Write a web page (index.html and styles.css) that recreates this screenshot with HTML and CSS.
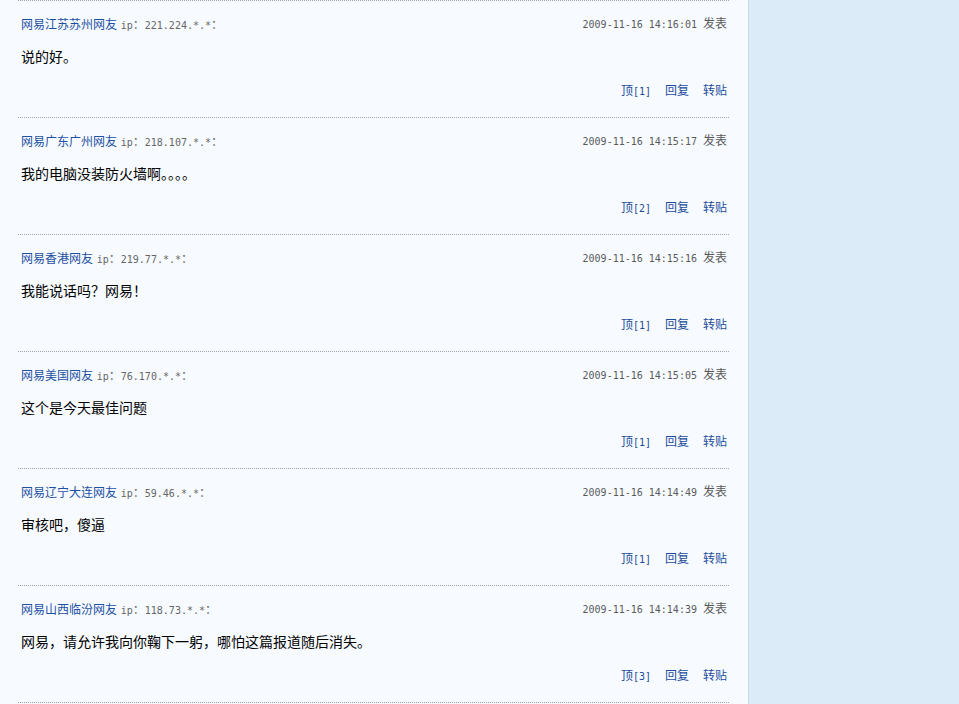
FILE: index.html
```html
<!DOCTYPE html>
<html lang="zh-CN">
<head>
<meta charset="utf-8">
<title>网友评论</title>
<link rel="stylesheet" href="styles.css">
</head>
<body>
<div class="page">
  <main class="main">
    <div class="comment">
      <div class="head">
        <div class="who"><a class="name" href="#">网易江苏苏州网友</a> <span class="ip"><span class="mono">ip</span>：<span class="mono">221.224.*.*</span>：</span></div>
        <div class="time"><span class="mono">2009-11-16 14:16:01 </span>发表</div>
      </div>
      <p class="text">说的好。</p>
      <div class="ops"><a href="#">顶<span class="mono">[1]</span></a><a href="#">回复</a><a href="#">转贴</a></div>
    </div>
    <div class="comment">
      <div class="head">
        <div class="who"><a class="name" href="#">网易广东广州网友</a> <span class="ip"><span class="mono">ip</span>：<span class="mono">218.107.*.*</span>：</span></div>
        <div class="time"><span class="mono">2009-11-16 14:15:17 </span>发表</div>
      </div>
      <p class="text">我的电脑没装防火墙啊。。。。</p>
      <div class="ops"><a href="#">顶<span class="mono">[2]</span></a><a href="#">回复</a><a href="#">转贴</a></div>
    </div>
    <div class="comment">
      <div class="head">
        <div class="who"><a class="name" href="#">网易香港网友</a> <span class="ip"><span class="mono">ip</span>：<span class="mono">219.77.*.*</span>：</span></div>
        <div class="time"><span class="mono">2009-11-16 14:15:16 </span>发表</div>
      </div>
      <p class="text">我能说话吗？网易！</p>
      <div class="ops"><a href="#">顶<span class="mono">[1]</span></a><a href="#">回复</a><a href="#">转贴</a></div>
    </div>
    <div class="comment">
      <div class="head">
        <div class="who"><a class="name" href="#">网易美国网友</a> <span class="ip"><span class="mono">ip</span>：<span class="mono">76.170.*.*</span>：</span></div>
        <div class="time"><span class="mono">2009-11-16 14:15:05 </span>发表</div>
      </div>
      <p class="text">这个是今天最佳问题</p>
      <div class="ops"><a href="#">顶<span class="mono">[1]</span></a><a href="#">回复</a><a href="#">转贴</a></div>
    </div>
    <div class="comment">
      <div class="head">
        <div class="who"><a class="name" href="#">网易辽宁大连网友</a> <span class="ip"><span class="mono">ip</span>：<span class="mono">59.46.*.*</span>：</span></div>
        <div class="time"><span class="mono">2009-11-16 14:14:49 </span>发表</div>
      </div>
      <p class="text">审核吧，傻逼</p>
      <div class="ops"><a href="#">顶<span class="mono">[1]</span></a><a href="#">回复</a><a href="#">转贴</a></div>
    </div>
    <div class="comment">
      <div class="head">
        <div class="who"><a class="name" href="#">网易山西临汾网友</a> <span class="ip"><span class="mono">ip</span>：<span class="mono">118.73.*.*</span>：</span></div>
        <div class="time"><span class="mono">2009-11-16 14:14:39 </span>发表</div>
      </div>
      <p class="text">网易，请允许我向你鞠下一躬，哪怕这篇报道随后消失。</p>
      <div class="ops"><a href="#">顶<span class="mono">[3]</span></a><a href="#">回复</a><a href="#">转贴</a></div>
    </div>
    <div class="comment comment-end"></div>
  </main>
  <aside class="side"></aside>
</div>
</body>
</html>
```
FILE: styles.css
```css
html, body {
  margin: 0;
  padding: 0;
  height: 100%;
}
body {
  font-family: "Noto Sans CJK SC", "Liberation Sans", sans-serif;
  font-size: 12px;
  color: #000;
  background: #dcebf8;
}
.page {
  display: flex;
  min-height: 100%;
  overflow: hidden;
}
.main {
  width: 711px;
  padding: 0 19px 0 18px;
  background: #f7fbff;
  border-right: 1px solid #c9d9ea;
  flex: none;
}
.side {
  flex: 1;
  background: #dcebf8;
}
.comment {
  border-top: 1px dotted #a3a3a3;
  height: 116px;
  padding: 0 2px 0 3px;
}
.comment-end {
  height: 2px;
}
.head {
  display: flex;
  justify-content: space-between;
  align-items: center;
  padding-top: 14px;
  height: 20px;
  line-height: 20px;
}
.name {
  color: #1d50a3;
  text-decoration: none;
  font-size: 12px;
}
.ip {
  color: #666;
  font-size: 12px;
  margin-left: 1px;
}
.mono {
  font-family: "DejaVu Sans Mono", "Liberation Mono", monospace;
  font-size: 10px;
}
.time {
  color: #5a5a5a;
  font-size: 12px;
  margin-top: -3px;
}
.text {
  margin: 10px 0 0;
  font-size: 14px;
  line-height: 22px;
  height: 24px;
}
.ops {
  margin-top: 11px;
  display: flex;
  justify-content: flex-end;
  gap: 14px;
  line-height: 20px;
  height: 20px;
}
.ops a {
  color: #1d4c9b;
  text-decoration: none;
  font-size: 12px;
}
```
